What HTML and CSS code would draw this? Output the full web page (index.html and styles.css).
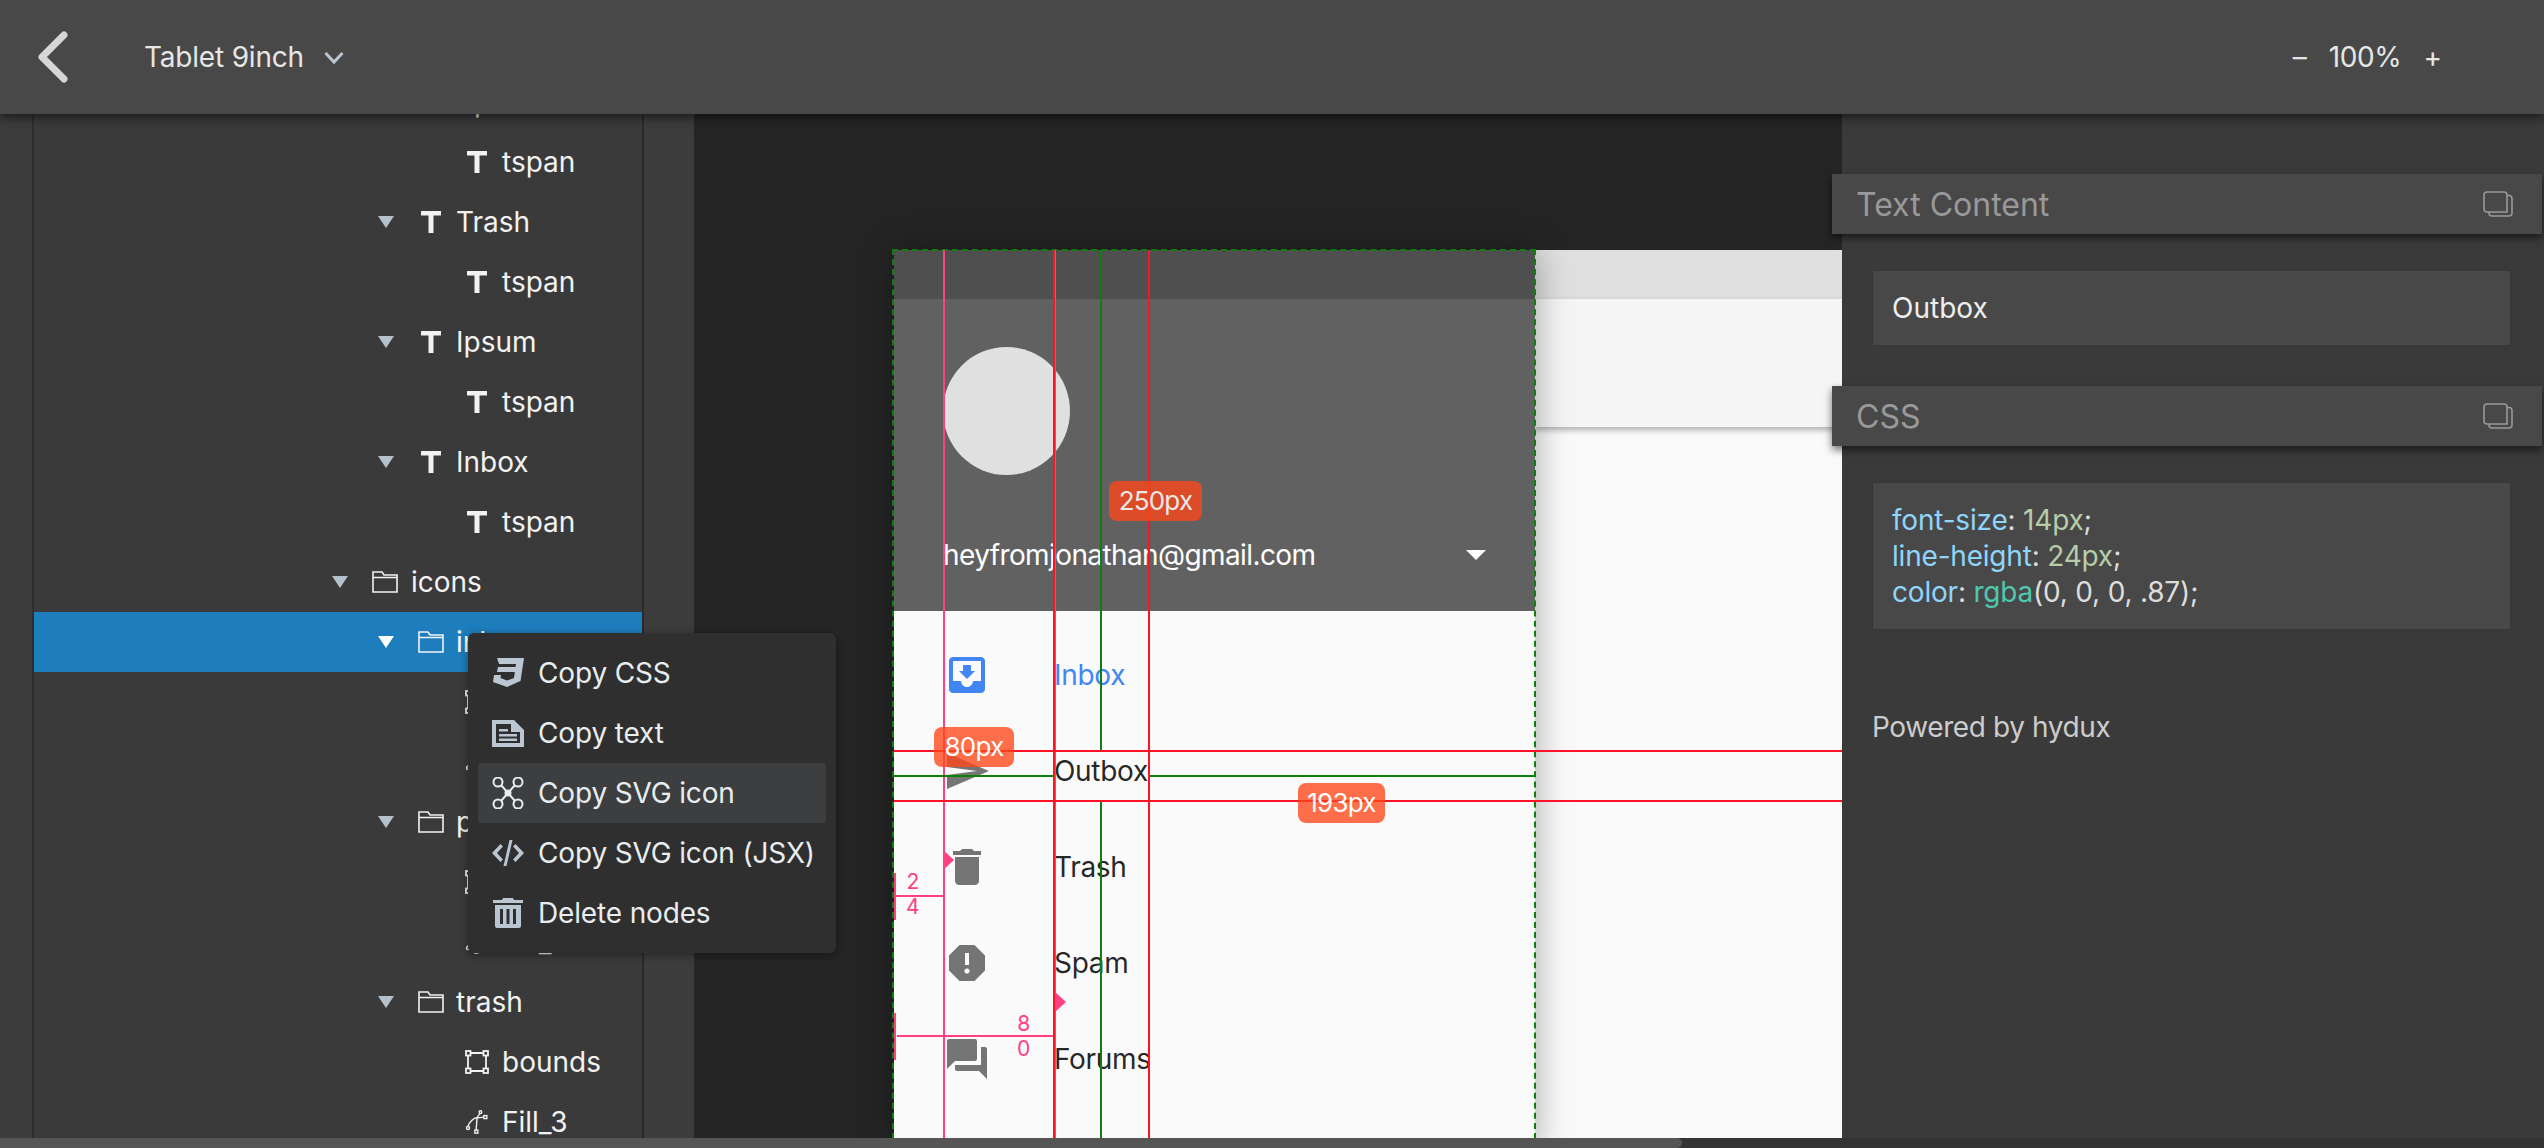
FILE: index.html
```html
<!DOCTYPE html>
<html lang="en">
<head>
  <meta charset="UTF-8">
  <title>Sketch inspector</title>
  <link rel="stylesheet" href="styles.css">
</head>
<body>

<svg class="sprites" width="0" height="0">
  <symbol id="i-arrow" viewBox="0 0 16 12"><path d="M0 0h16L8 12z"/></symbol>
  <symbol id="i-text" viewBox="0 0 20 22"><path d="M0 0h20v4.500h-7.500V22h-5V4.500H0z"/></symbol>
  <symbol id="i-folder" viewBox="0 0 26 22"><path d="M1 6.500V1h9l2 3h13v17H1zM1 6.500h24" fill="none" stroke="currentColor" stroke-width="1.600"/></symbol>
  <symbol id="i-bounds" viewBox="0 0 24 24"><g fill="none" stroke="currentColor" stroke-width="1.800"><path d="M5 3h14M5 21h14M3 5v14M21 5v14"/><rect x="1" y="1" width="4.500" height="4.500"/><rect x="18.500" y="1" width="4.500" height="4.500"/><rect x="1" y="18.500" width="4.500" height="4.500"/><rect x="18.500" y="18.500" width="4.500" height="4.500"/></g></symbol>
  <symbol id="i-path" viewBox="0 0 28 28"><g fill="none" stroke="currentColor" stroke-width="1.600"><path d="M3.500 19C5 14 10 9 14 9c4 0 6-.5 8-1M17.500 4L14 9M14 9l-1 14.500"/><circle cx="3.500" cy="21" r="1.800"/><circle cx="18" cy="2.500" r="1.600"/><rect x="22" y="6.500" width="3.500" height="3.500"/><rect x="11.500" y="23.500" width="3.500" height="3.500"/></g></symbol>
  <symbol id="i-copy" viewBox="0 0 30 26"><g fill="none" stroke="currentColor" stroke-width="1.600"><path d="M24 21H4a3 3 0 0 1-3-3V4a3 3 0 0 1 3-3h17a3 3 0 0 1 3 3z"/><path d="M24 4.500h2a3 3 0 0 1 3 3V22a3 3 0 0 1-3 3H9a3 3 0 0 1-3-3v-1"/></g></symbol>
</svg>

<header class="topbar">
  <svg class="back" width="32" height="52" viewBox="0 0 32 52"><path d="M27 4L5 26l22 22" fill="none" stroke="#d6d6d6" stroke-width="7" stroke-linecap="round" stroke-linejoin="round"/></svg>
  <span class="device-name">Tablet 9inch</span>
  <svg class="caret" width="20" height="14" viewBox="0 0 20 14"><path d="M1.500 2l8.500 9 8.500-9" fill="none" stroke="#b8c7d3" stroke-width="3"/></svg>
  <div class="zoom-box">
    <span class="zoom-btn">–</span>
    <span class="zoom-val">100%</span>
    <span class="zoom-btn">+</span>
  </div>
</header>

<div class="main">
  <aside class="side">
    <ul class="tree">
      <li class="row lv2"><svg class="arrow"><use href="#i-arrow"/></svg><svg class="ic-t"><use href="#i-text"/></svg><span>Spam</span></li>
      <li class="row lv3"><svg class="ic-t"><use href="#i-text"/></svg><span>tspan</span></li>
      <li class="row lv2"><svg class="arrow"><use href="#i-arrow"/></svg><svg class="ic-t"><use href="#i-text"/></svg><span>Trash</span></li>
      <li class="row lv3"><svg class="ic-t"><use href="#i-text"/></svg><span>tspan</span></li>
      <li class="row lv2"><svg class="arrow"><use href="#i-arrow"/></svg><svg class="ic-t"><use href="#i-text"/></svg><span>Ipsum</span></li>
      <li class="row lv3"><svg class="ic-t"><use href="#i-text"/></svg><span>tspan</span></li>
      <li class="row lv2"><svg class="arrow"><use href="#i-arrow"/></svg><svg class="ic-t"><use href="#i-text"/></svg><span>Inbox</span></li>
      <li class="row lv3"><svg class="ic-t"><use href="#i-text"/></svg><span>tspan</span></li>
      <li class="row lv1"><svg class="arrow"><use href="#i-arrow"/></svg><svg class="ic-f"><use href="#i-folder"/></svg><span>icons</span></li>
      <li class="row lv2 active"><svg class="arrow"><use href="#i-arrow"/></svg><svg class="ic-f"><use href="#i-folder"/></svg><span>inbox</span></li>
      <li class="row lv3"><svg class="ic-b"><use href="#i-bounds"/></svg><span>bounds</span></li>
      <li class="row lv3"><svg class="ic-b"><use href="#i-path"/></svg><span>Fill_1</span></li>
      <li class="row lv2"><svg class="arrow"><use href="#i-arrow"/></svg><svg class="ic-f"><use href="#i-folder"/></svg><span>paper</span></li>
      <li class="row lv3"><svg class="ic-b"><use href="#i-bounds"/></svg><span>bounds</span></li>
      <li class="row lv3"><svg class="ic-b"><use href="#i-path"/></svg><span>Fill_2</span></li>
      <li class="row lv2"><svg class="arrow"><use href="#i-arrow"/></svg><svg class="ic-f"><use href="#i-folder"/></svg><span>trash</span></li>
      <li class="row lv3"><svg class="ic-b"><use href="#i-bounds"/></svg><span>bounds</span></li>
      <li class="row lv3"><svg class="ic-b"><use href="#i-path"/></svg><span>Fill_3</span></li>
    </ul>
  </aside>

  <section class="canvas">
    <div class="device">
      <div class="drawer">
        <div class="drawer-status"></div>
        <div class="drawer-head">
          <div class="avatar"></div>
          <div class="account">
            <span>heyfromjonathan@gmail.com</span>
            <svg width="20" height="10" viewBox="0 0 20 10"><path d="M0 0h20L10 10z" fill="#fff"/></svg>
          </div>
        </div>
        <ul class="menu-list">
          <li class="on"><svg viewBox="0 0 24 24"><path d="M19 3H4.990c-1.110 0-1.980.9-1.980 2L3 19c0 1.100.88 2 1.990 2H19c1.100 0 2-.9 2-2V5c0-1.100-.9-2-2-2zm0 12h-4c0 1.660-1.350 3-3 3s-3-1.340-3-3H4.990V5H19v10zm-3-5h-2V7h-4v3H8l4 4 4-4z"/></svg><span>Inbox</span></li>
          <li><svg viewBox="0 0 24 24"><path d="M2.010 21L23 12 2.010 3 2 10l15 2-15 2z"/></svg><span>Outbox</span></li>
          <li><svg viewBox="0 0 24 24"><path d="M6 19c0 1.100.9 2 2 2h8c1.100 0 2-.9 2-2V7H6v12zM19 4h-3.500l-1-1h-5l-1 1H5v2h14V4z"/></svg><span>Trash</span></li>
          <li><svg viewBox="0 0 24 24"><path d="M15.730 3H8.270L3 8.270v7.460L8.270 21h7.460L21 15.730V8.270L15.730 3zM12 17.300c-.72 0-1.300-.58-1.300-1.300 0-.72.58-1.300 1.300-1.300.72 0 1.300.58 1.300 1.300 0 .72-.58 1.300-1.300 1.300zm1-4.300h-2V7h2v6z"/></svg><span>Spam</span></li>
          <li><svg viewBox="0 0 24 24"><path d="M21 6h-2v9H6v2c0 .55.45 1 1 1h11l4 4V7c0-.55-.45-1-1-1zm-4 6V3c0-.55-.45-1-1-1H3c-.55 0-1 .45-1 1v14l4-4h10c.55 0 1-.45 1-1z"/></svg><span>Forums</span></li>
        </ul>
      </div>
      <div class="content">
        <div class="content-status"></div>
        <div class="appbar"></div>
      </div>
    </div>

    <!-- guides over the artboard -->
    <div class="g outline"></div>
    <div class="g v pink v1"></div>
    <div class="g v pink v3"></div>
    <div class="g v red v2"></div>
    <div class="g v green v4a"></div>
    <div class="g v green v4b"></div>
    <div class="g v red v5"></div>
    <div class="g h red h1"></div>
    <div class="g h red h2"></div>
    <div class="g h green h3a"></div>
    <div class="g h green h3b"></div>
    <div class="tag tag-250">250px</div>
    <div class="tag tag-80">80px</div>
    <div class="tag tag-193">193px</div>
    <div class="g mark m1"></div>
    <div class="g mark m2"></div>
    <div class="g bar b1"></div>
    <div class="g bar b2"></div>
    <div class="g h pink p1"></div>
    <div class="g h pink p2"></div>
    <div class="num n1">2<br>4</div>
    <div class="num n2">8<br>0</div>
  </section>

  <aside class="panel">
    <div class="panel-title"><span>Text Content</span><svg class="copy"><use href="#i-copy"/></svg></div>
    <div class="panel-box single">Outbox</div>
    <div class="panel-title second"><span>CSS</span><svg class="copy"><use href="#i-copy"/></svg></div>
    <div class="panel-box code">
      <div><span class="k">font-size</span>: <span class="v-num">14px</span>;</div>
      <div><span class="k">line-height</span>: <span class="v-num">24px</span>;</div>
      <div><span class="k">color</span>: <span class="fn">rgba</span>(0, 0, 0, .87);</div>
    </div>
    <div class="powered">Powered by hydux</div>
  </aside>
</div>

<div class="hscroll"><div class="thumb"></div></div>

<div class="ctx">
  <div class="ctx-item">
    <svg viewBox="0 0 32 32"><path d="M5 1h27l-3.500 23L15 30 1 25l1-7h7l-.5 3 6.500 2.500 7-2.500.8-6H5l1-5h17.500l.6-3H7z"/></svg>
    <span>Copy CSS</span>
  </div>
  <div class="ctx-item">
    <svg viewBox="0 0 32 32"><path fill-rule="evenodd" d="M0 3h22l10 10v17H0zM4 7v19h24V15h-9V7zM7 12h9v2.500H7zM7 17h18v2.500H7zM7 21.500h18V24H7z"/></svg>
    <span>Copy text</span>
  </div>
  <div class="ctx-item hover">
    <svg viewBox="0 0 32 32"><g fill="none" stroke="#e8edf0" stroke-width="2"><circle cx="6" cy="5" r="4.500"/><circle cx="26" cy="5" r="4.500"/><circle cx="6" cy="27" r="4.500"/><circle cx="26" cy="27" r="4.500"/><path d="M9 8l14 16M23 8L9 24"/></g><circle cx="16" cy="16" r="3.500" fill="#e8edf0"/></svg>
    <span>Copy SVG icon</span>
  </div>
  <div class="ctx-item">
    <svg viewBox="0 0 32 32"><path d="M8.500 7L0 16l8.500 9 2.500-2.500L5 16l6-6.500zM23.500 7L32 16l-8.500 9-2.500-2.500L27 16l-6-6.500zM17.500 3h3L14.500 29h-3z"/></svg>
    <span>Copy SVG icon (JSX)</span>
  </div>
  <div class="ctx-item">
    <svg viewBox="0 0 32 32"><path fill-rule="evenodd" d="M11 1h10l1 2h9v3H1V3h9zM3 8h26v21a2 2 0 0 1-2 2H5a2 2 0 0 1-2-2zM8 12v15h3V12zM14.500 12v15h3V12zM21 12v15h3V12z"/></svg>
    <span>Delete nodes</span>
  </div>
</div>

</body>
</html>
```

FILE: styles.css
```css
* {
  box-sizing: border-box;
}
html, body {
  margin: 0;
  height: 100%;
  overflow: hidden;
}
body {
  font-family: Inter, "Liberation Sans", sans-serif;
  font-size: 28px;
  background: #3a3a3a;
  color: #eee;
  display: flex;
  flex-direction: column;
  position: relative;
}
ul {
  list-style: none;
  margin: 0;
  padding: 0;
}
.sprites {
  position: absolute;
}

/* top bar */
.topbar {
  height: 114px;
  flex: none;
  background: #484848;
  box-shadow: 0 3px 10px rgba(0, 0, 0, .6);
  display: flex;
  align-items: center;
  padding-left: 37px;
  position: relative;
  z-index: 5;
}
.device-name {
  margin-left: 75px;
  color: #e6e6e6;
  letter-spacing: -.2px;
}
.caret {
  margin-left: 20px;
  margin-top: 2px;
}
.zoom-box {
  margin-left: auto;
  margin-right: 102px;
  display: flex;
  gap: 22px;
  color: #e6e6e6;
}
.zoom-val {
  letter-spacing: -.4px;
}

.main {
  flex: 1;
  min-height: 0;
  display: flex;
}

/* layer tree */
.side {
  width: 694px;
  flex: none;
  background: #3c3c3c;
  padding-left: 32px;
  overflow: hidden;
  position: relative;
}
.tree {
  width: 612px;
  margin-top: -42px;
  background: #3a3a3a;
  border-left: 2px solid #2a2e2e;
  border-right: 2px solid #2a2a2a;
}
.row {
  height: 60px;
  display: flex;
  align-items: center;
  color: #f2f2f2;
}
.row svg {
  flex: none;
  color: #f2f2f2;
  fill: currentColor;
}
.arrow {
  width: 16px;
  height: 12px;
  color: #b4c2ce !important;
}
.ic-t {
  width: 20px;
  height: 22px;
}
.ic-f {
  width: 26px;
  height: 22px;
}
.ic-b {
  width: 24px;
  height: 24px;
}
.lv1 {
  padding-left: 298px;
}
.lv1 .ic-f {
  margin: 0 13px 0 24px;
}
.lv2 {
  padding-left: 344px;
}
.lv2 .ic-t {
  margin: 0 15px 0 27px;
}
.lv2 .ic-f {
  margin: 0 12px 0 24px;
}
.lv3 {
  padding-left: 431px;
}
.lv3 .ic-t {
  margin: 0 15px 0 2px;
}
.lv3 .ic-b {
  margin-right: 13px;
}
.active {
  background: #1e7dbc;
  color: #fff;
}
.active .arrow {
  color: #fff !important;
}

/* artboard */
.canvas {
  flex: 1;
  min-width: 0;
  background: #252525;
  padding: 136px 0 0 200px;
  position: relative;
  overflow: hidden;
}
.device {
  display: flex;
  width: 960px;
  height: 900px;
  background: #fafafa;
}
.drawer {
  width: 641px;
  flex: none;
  background: #fafafa;
  box-shadow: 0 0 34px rgba(0, 0, 0, .35);
  position: relative;
  z-index: 1;
}
.drawer-status {
  height: 49px;
  background: #4f4f4f;
}
.drawer-head {
  height: 312px;
  background: #616161;
  padding: 48px 49px 0;
}
.avatar {
  width: 127px;
  height: 128px;
  border-radius: 50%;
  background: #e0e0e0;
}
.account {
  margin-top: 62px;
  height: 36px;
  display: flex;
  align-items: center;
  justify-content: space-between;
  color: #fff;
  letter-spacing: -.6px;
}
.menu-list {
  padding-top: 16px;
}
.menu-list li {
  height: 96px;
  display: flex;
  align-items: center;
  padding-left: 49px;
  color: rgba(0, 0, 0, .87);
  letter-spacing: -.3px;
}
.menu-list svg {
  width: 48px;
  height: 48px;
  fill: #757575;
  margin-right: 63px;
  flex: none;
}
.menu-list .on {
  color: #4285f4;
}
.menu-list .on svg {
  fill: #4285f4;
}
.content {
  flex: 1;
}
.content-status {
  height: 49px;
  background: #e0e0e0;
}
.appbar {
  height: 128px;
  background: #f5f5f5;
  box-shadow: 0 3px 6px rgba(0, 0, 0, .3);
}

/* guides */
.g {
  position: absolute;
  z-index: 2;
}
.outline {
  left: 198px;
  top: 135px;
  width: 644px;
  height: 900px;
  border: 2px dashed #0d7f0d;
  border-bottom: 0;
}
.v {
  width: 2px;
  top: 136px;
  bottom: 0;
}
.h {
  height: 2px;
}
.red {
  background: #ff1226;
}
.pink {
  background: #ff4081;
}
.green {
  background: #0d7f0d;
}
.v1 {
  left: 249px;
}
.v2 {
  left: 359px;
}
.v3 {
  left: 360px;
}
.v4a {
  left: 406px;
  bottom: auto;
  height: 500px;
}
.v4b {
  left: 406px;
  top: 686px;
}
.v5 {
  left: 454px;
}
.h1 {
  left: 200px;
  right: 0;
  top: 636px;
}
.h2 {
  left: 200px;
  right: 0;
  top: 686px;
}
.h3a {
  left: 200px;
  width: 159px;
  top: 661px;
}
.h3b {
  left: 456px;
  width: 385px;
  top: 661px;
}
.tag {
  position: absolute;
  z-index: 3;
  height: 40px;
  border-radius: 8px;
  background: rgba(255, 70, 24, .78);
  color: #fff;
  font-size: 26px;
  line-height: 40px;
  text-align: center;
  letter-spacing: -.8px;
}
.tag-250 {
  left: 415px;
  top: 367px;
  width: 93px;
  color: #e8e8e8;
}
.tag-80 {
  left: 240px;
  top: 613px;
  width: 80px;
}
.tag-193 {
  left: 604px;
  top: 669px;
  width: 87px;
}
.mark {
  width: 11px;
  height: 20px;
  background: #ff4081;
  clip-path: polygon(0 0, 100% 50%, 0 100%);
}
.m1 {
  left: 249px;
  top: 736px;
}
.m2 {
  left: 361px;
  top: 878px;
}
.bar {
  left: 200px;
  width: 2px;
  height: 47px;
  background: #ff4081;
}
.b1 {
  top: 759px;
}
.b2 {
  top: 899px;
}
.p1 {
  left: 202px;
  width: 47px;
  top: 781px;
}
.p2 {
  left: 203px;
  width: 156px;
  top: 921px;
}
.num {
  position: absolute;
  z-index: 3;
  color: #ff4081;
  font-size: 21px;
  line-height: 25px;
  text-align: center;
}
.n1 {
  left: 212px;
  top: 755px;
}
.n2 {
  left: 323px;
  top: 897px;
}

/* right panel */
.panel {
  width: 702px;
  flex: none;
  background: #3a3a3a;
  padding-top: 60px;
  position: relative;
  z-index: 2;
}
.panel-title {
  height: 60px;
  margin-left: -10px;
  margin-right: 2px;
  padding: 0 29px 0 24px;
  background: #484848;
  box-shadow: 0 4px 8px rgba(0, 0, 0, .55);
  display: flex;
  align-items: center;
  justify-content: space-between;
  color: #999;
  font-size: 32px;
  position: relative;
}
.copy {
  width: 30px;
  height: 26px;
  color: #999;
}
.second {
  margin-top: 41px;
}
.panel-box {
  margin: 37px 34px 0 31px;
  background: #484848;
  padding: 0 19px;
  box-shadow: 0 0 2px rgba(0, 0, 0, .15);
}
.single {
  height: 74px;
  line-height: 74px;
}
.code {
  height: 146px;
  padding-top: 19px;
  line-height: 36px;
  color: #ddd;
  letter-spacing: -.2px;
}
.k {
  color: #8fd5fb;
}
.v-num {
  color: #b5cea8;
}
.fn {
  color: #4ec9b0;
}
.powered {
  margin: 81px 0 0 30px;
  color: #ccc;
  letter-spacing: -.4px;
}

/* scrollbar strip */
.hscroll {
  height: 10px;
  flex: none;
  background: #333;
}
.thumb {
  width: 1682px;
  height: 100%;
  background: #555;
  border-radius: 0 5px 5px 0;
}

/* context menu */
.ctx {
  position: absolute;
  left: 468px;
  top: 633px;
  width: 368px;
  height: 320px;
  padding: 10px;
  background: #2f2f2f;
  border-radius: 6px;
  box-shadow: 0 2px 8px rgba(0, 0, 0, .4);
  z-index: 6;
}
.ctx-item {
  height: 60px;
  display: flex;
  align-items: center;
  padding-left: 14px;
  border-radius: 4px;
  color: #e8edf0;
  letter-spacing: -.15px;
}
.ctx-item svg {
  width: 32px;
  height: 32px;
  margin-right: 14px;
  fill: #bac7d3;
  flex: none;
}
.hover {
  background: #3d3e40;
}
```
